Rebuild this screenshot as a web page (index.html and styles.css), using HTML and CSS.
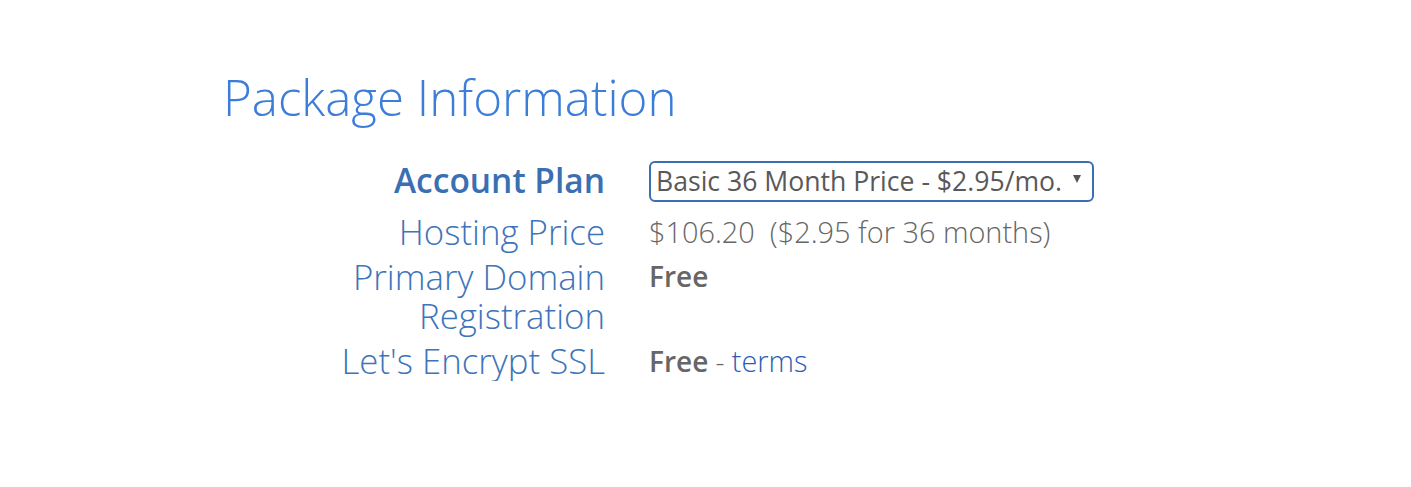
FILE: index.html
```html
<!DOCTYPE html>
<html>
<head>
<meta charset="utf-8">
<link rel="stylesheet" href="styles.css">
</head>
<body>
<div class="page">
  <h1 class="title">Package Information</h1>
  <div class="info">
    <div class="label label-strong">Account Plan</div>
    <div class="value">
      <div class="select"><span class="select-text">Basic 36 Month Price - $2.95/mo.</span><span class="select-arrow"></span></div>
    </div>
    <div class="label">Hosting Price</div>
    <div class="value price">$106.20&nbsp; ($2.95 for 36 months)</div>
    <div class="label">Primary Domain<br>Registration</div>
    <div class="value"><strong class="free">Free</strong></div>
    <div class="label">Let's Encrypt SSL</div>
    <div class="value"><strong class="free">Free</strong> <span class="dash">-</span> <a class="terms" href="#">terms</a></div>
  </div>
</div>
</body>
</html>
```
FILE: styles.css
```css
html, body {
  margin: 0;
  padding: 0;
  background: #ffffff;
}
body {
  font-family: "Open Sans", "Liberation Sans", sans-serif;
}
.page {
  padding: 68px 0 0 223px;
}
.title {
  margin: 0;
  font-size: 49.3px;
  line-height: 58px;
  font-weight: 300;
  color: #3b7dd8;
}
.info {
  margin-top: 35px;
  display: grid;
  grid-template-columns: 382px auto;
  column-gap: 44px;
  row-gap: 6px;
  align-items: start;
}
.label {
  text-align: right;
  font-size: 34.8px;
  line-height: 39px;
  font-weight: 300;
  color: #3d74ba;
}
.label-strong {
  font-size: 33.5px;
  font-weight: 600;
  color: #3a6fb3;
  line-height: 39px;
  padding-bottom: 6px;
}
.value {
  font-size: 28px;
  line-height: 39px;
  color: #666666;
}
.price {
  font-size: 28.9px;
  font-weight: 300;
}
.select {
  display: flex;
  align-items: center;
  box-sizing: border-box;
  width: 445px;
  height: 41px;
  border: 2px solid #3a6fb5;
  border-radius: 6px;
  padding: 0 11px 0 5px;
  color: #595959;
  font-size: 26.6px;
  line-height: 37px;
  white-space: nowrap;
}
.select-text {
  flex: 0 0 auto;
}
.select-arrow {
  margin-left: auto;
  margin-top: -6px;
  width: 0;
  height: 0;
  border-left: 4px solid transparent;
  border-right: 4px solid transparent;
  border-top: 8px solid #555555;
}
.free {
  font-weight: 600;
  color: #666666;
}
.dash {
  font-weight: 300;
}
.terms {
  font-size: 28.8px;
  font-weight: 300;
  color: #2b5cb8;
  text-decoration: none;
}
```
